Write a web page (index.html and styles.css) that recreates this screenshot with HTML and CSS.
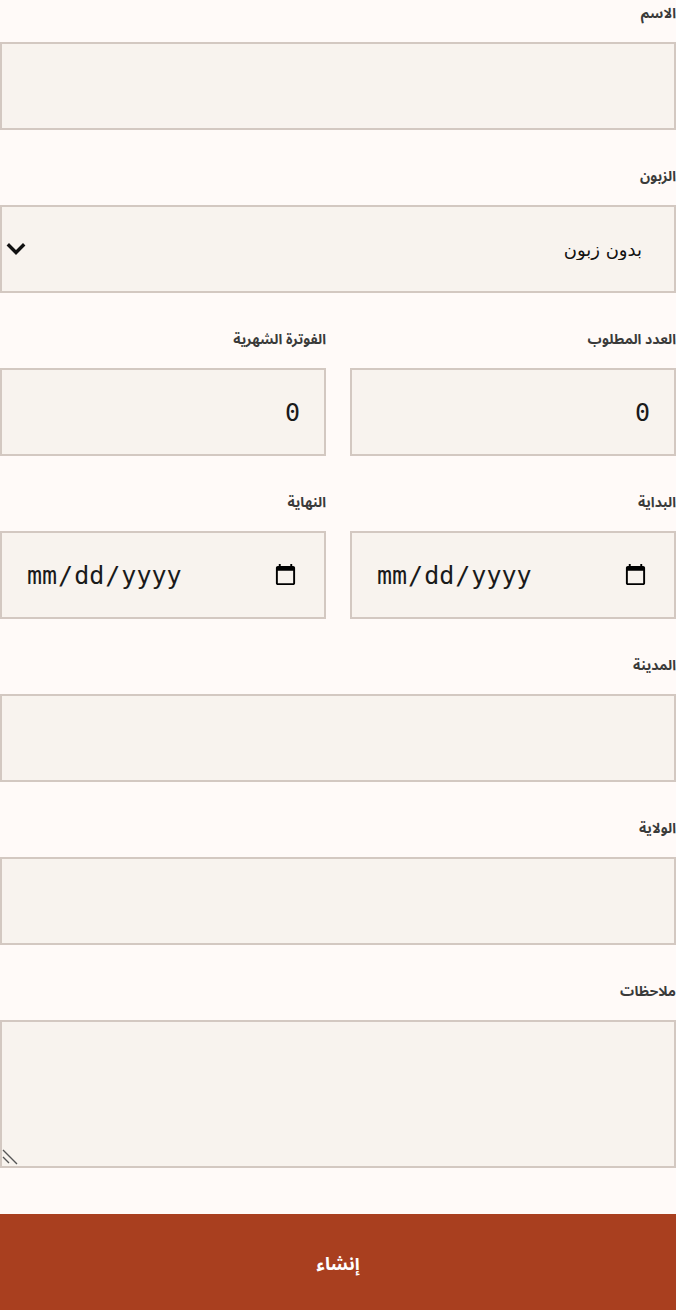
FILE: index.html
```html
<!DOCTYPE html>
<html lang="ar" dir="rtl">
<head>
<meta charset="utf-8">
<title>إنشاء</title>
<link rel="stylesheet" href="styles.css">
</head>
<body>
<form class="form">
  <div class="field">
    <label class="label" for="name">الاسم</label>
    <input class="control" id="name" type="text">
  </div>
  <div class="field">
    <label class="label" for="client">الزبون</label>
    <div class="select-wrap">
      <select class="control select" id="client">
        <option>بدون زبون</option>
      </select>
      <svg class="chevron" viewBox="0 0 20 20" width="20" height="20" aria-hidden="true">
        <path d="M3 6.5 L10 13.5 L17 6.5" fill="none" stroke="#111" stroke-width="3.4" stroke-linecap="square"/>
      </svg>
    </div>
  </div>
  <div class="row">
    <div class="field">
      <label class="label" for="qty">العدد المطلوب</label>
      <input class="control num" id="qty" type="number" value="0">
    </div>
    <div class="field">
      <label class="label" for="bill">الفوترة الشهرية</label>
      <input class="control num" id="bill" type="number" value="0">
    </div>
  </div>
  <div class="row">
    <div class="field">
      <label class="label" for="start">البداية</label>
      <input class="control date" id="start" type="date" dir="ltr">
    </div>
    <div class="field">
      <label class="label" for="end">النهاية</label>
      <input class="control date" id="end" type="date" dir="ltr">
    </div>
  </div>
  <div class="field">
    <label class="label" for="city">المدينة</label>
    <input class="control" id="city" type="text">
  </div>
  <div class="field">
    <label class="label" for="state">الولاية</label>
    <input class="control" id="state" type="text">
  </div>
  <div class="field">
    <label class="label" for="notes">ملاحظات</label>
    <div class="textarea-wrap">
      <textarea class="control textarea" id="notes"></textarea>
      <svg class="resizer" viewBox="0 0 20 20" width="20" height="20" aria-hidden="true">
        <path d="M3 4 L17 18 M3 11 L9 17" fill="none" stroke="#555" stroke-width="1.4"/>
      </svg>
    </div>
  </div>
  <button class="submit" type="submit">إنشاء</button>
</form>
</body>
</html>
```

FILE: styles.css
```css
html, body {
  margin: 0;
  padding: 0;
  background: #fffaf8;
}

body {
  font-family: "Noto Sans Arabic", "Noto Sans Arabic UI", "Noto Sans", "DejaVu Sans", sans-serif;
  color: #333;
}

.form {
  display: flex;
  flex-direction: column;
  gap: 37px;
  padding-top: 4px;
}

.field {
  display: flex;
  flex-direction: column;
  min-width: 0;
}

.label {
  display: block;
  font-size: 14px;
  font-weight: 700;
  line-height: 20px;
  height: 20px;
  margin-bottom: 18px;
  color: #3a3a3a;
}

.row {
  display: grid;
  grid-template-columns: 1fr 1fr;
  gap: 24px;
}

.control {
  box-sizing: border-box;
  width: 100%;
  height: 88px;
  margin: 0;
  padding: 0 24px;
  border: 2px solid #d3c8c1;
  border-radius: 0;
  background: #f8f3ee;
  font-family: "DejaVu Sans Mono", monospace;
  font-size: 25px;
  color: #1a1a1a;
  outline: none;
}

.select-wrap,
.textarea-wrap {
  position: relative;
}

.select {
  appearance: none;
  -webkit-appearance: none;
  font-family: "DejaVu Sans", sans-serif;
  font-size: 18px;
  padding-right: 32px;
  color: #111;
}

.chevron {
  position: absolute;
  left: 6px;
  top: 34px;
  pointer-events: none;
}

.num {
  text-align: right;
}

.date {
  text-align: left;
}

.textarea {
  display: block;
  height: 148px;
  padding: 12px 24px;
  resize: vertical;
}

.textarea::-webkit-resizer {
  background: transparent;
}

.resizer {
  position: absolute;
  left: 0;
  top: 126px;
  pointer-events: none;
}

.submit {
  margin-top: 9px;
  height: 100px;
  border: 0;
  background: #a93f1f;
  color: #fff;
  font-family: "Noto Sans Arabic", "Noto Sans Arabic UI", "Noto Sans", "DejaVu Sans", sans-serif;
  font-size: 18px;
  font-weight: 700;
  cursor: pointer;
}
```
